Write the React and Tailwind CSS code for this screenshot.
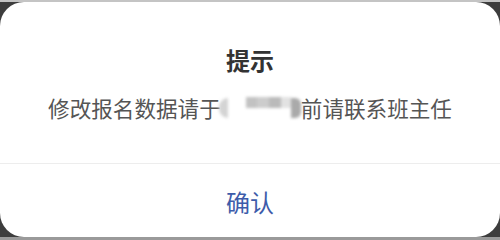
export default function App() {
  const font = { fontFamily: '"Noto Sans CJK SC", "Noto Sans", sans-serif' };
  return (
    <div className="w-[500px] h-[240px] bg-[#3d3d3d] flex flex-col overflow-hidden" style={font}>
      <div className="h-[2px] bg-[#c4c4c4] shrink-0" />
      <div className="flex-1 bg-white rounded-[24px] flex flex-col">
        <div className="pt-[42px] text-center text-[24px] leading-[32px] font-bold text-[#333333]">提示</div>
        <div className="mt-[17px] flex justify-center items-center text-[21.6px] leading-[30px] text-[#555555] whitespace-nowrap">
          <span>修改报名数据请于</span>
          <span className="w-[80px] h-[24px] flex items-center blur-[1.5px]">
            <span className="w-[9px] h-[20px] rounded-l-full bg-[#d4d4d4] ml-[-2px]" />
            <span className="w-[18px]" />
            <span className="w-[11px] h-[11px] bg-[#c2c2c2] self-start mt-[1px]" />
            <span className="w-[12px] h-[11px] bg-[#cccccc] self-start mt-[1px]" />
            <span className="w-[12px] h-[11px] bg-[#bababa] self-start mt-[1px]" />
            <span className="w-[10px] h-[11px] bg-[#e2e2e2] self-start mt-[1px]" />
            <span className="w-[10px] h-[20px] rounded-r-md bg-[#aaaaaa]" />
          </span>
          <span>前请联系班主任</span>
        </div>
        <div className="mt-[40px] h-px bg-[#ededed]" />
        <div className="flex-1 flex items-center justify-center pt-[2px] text-[24px] text-[#3d5caa]">确认</div>
      </div>
      <div className="h-[3px] bg-[#9a9a9a] shrink-0" />
    </div>
  );
}
